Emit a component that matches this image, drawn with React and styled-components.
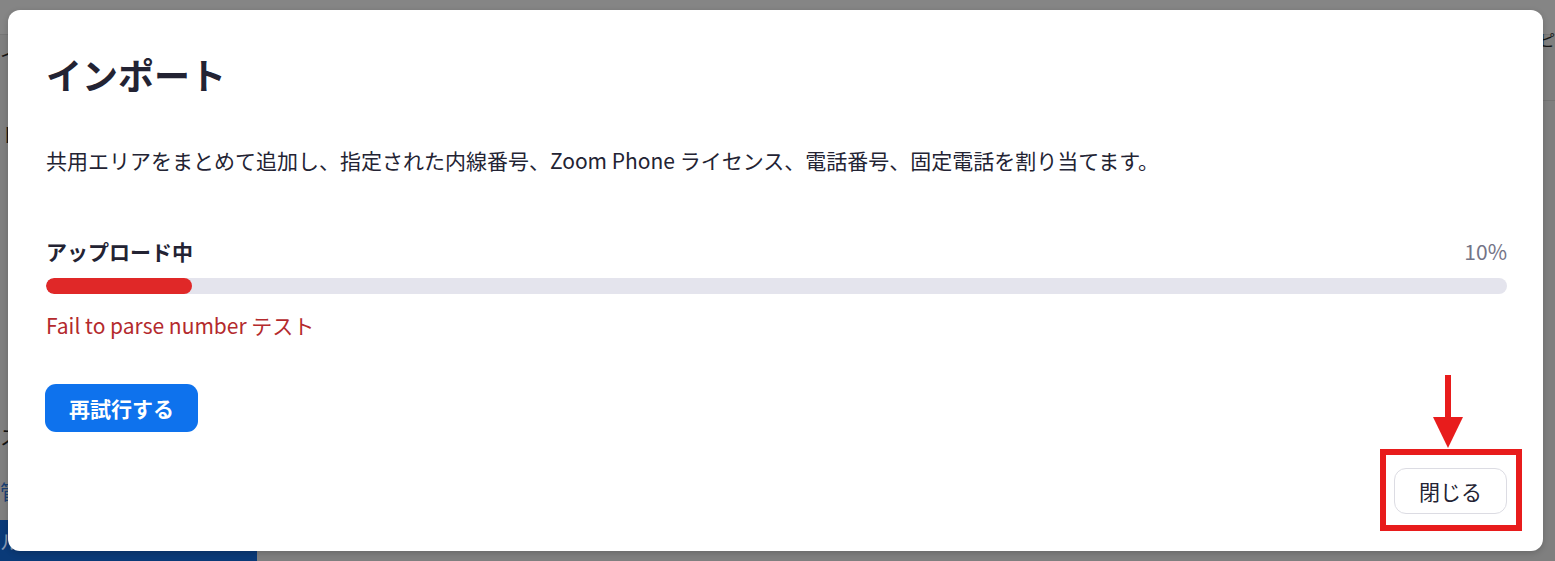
import React from "react";
import styled, { createGlobalStyle } from "styled-components";

const GlobalStyle = createGlobalStyle`
  html, body {
    margin: 0;
    padding: 0;
    width: 100%;
    height: 100%;
    overflow: hidden;
  }
  body {
    font-family: "Noto Sans CJK JP", "Noto Sans", sans-serif;
    background: #7f7f7f;
  }
`;

const Screen = styled.div`
  position: relative;
  width: 1555px;
  height: 561px;
  overflow: hidden;
  background: #7f7f7f;
`;

// faded page that sits behind the dialog
const BehindPage = styled.div`
  display: flex;
  flex-direction: column;
  height: 100%;
`;

const BehindHeader = styled.div`
  height: 34px;
  flex-shrink: 0;
  background: #858585;
  border-bottom: 1px solid #767676;
`;

const BehindBody = styled.div`
  flex: 1;
  display: flex;
`;

const BehindSide = styled.div`
  width: 257px;
  display: flex;
  flex-direction: column;
  font-size: 20px;
`;

const SideItem = styled.div`
  height: 40px;
  line-height: 40px;
  margin-top: ${(p) => p.gap || 0}px;
  color: ${(p) => p.color || "#141414"};
`;

const SideFoot = styled.div`
  margin-top: auto;
  height: 41px;
  background: #0a3a78;
  color: #8a9ab4;
  font-size: 20px;
  line-height: 44px;
  letter-spacing: 22px;
`;

const BehindMain = styled.div`
  flex: 1;
  display: flex;
  flex-direction: column;
`;

const BehindToolbar = styled.div`
  height: 65px;
  border-bottom: 1px solid #747474;
  display: flex;
  justify-content: flex-end;
  font-size: 16px;
  line-height: 8px;
  color: #141414;
`;

const Overlay = styled.div`
  position: absolute;
  inset: 0;
  padding: 10px 12px 10px 8px;
  display: flex;
`;

const Modal = styled.div`
  flex: 1;
  background: #ffffff;
  border-radius: 12px;
  box-shadow: 0 2px 6px rgba(0, 0, 0, 0.18);
  padding: 40px 36px 37px 38px;
  display: flex;
  flex-direction: column;
  color: #232333;
`;

const Title = styled.h1`
  margin: 0;
  font-size: 36px;
  line-height: 48px;
  font-weight: 700;
  color: #232333;
`;

const Description = styled.p`
  margin: 47px 0 0;
  font-size: 21px;
  line-height: 30px;
  color: #232333;
`;

const ProgressHead = styled.div`
  margin-top: 61px;
  display: flex;
  justify-content: space-between;
  align-items: center;
  height: 30px;
  font-size: 21px;
  line-height: 30px;
`;

const ProgressLabel = styled.span`
  font-weight: 700;
  color: #232333;
`;

const Percent = styled.span`
  color: #747487;
`;

const Track = styled.div`
  margin-top: 12px;
  height: 16px;
  border-radius: 8px;
  background: #e4e4ed;
  overflow: hidden;
`;

const Fill = styled.div`
  height: 100%;
  border-radius: 8px;
  background: #e02828;
`;

const ErrorText = styled.div`
  margin-top: 16px;
  font-size: 21px;
  line-height: 30px;
  color: #b42a2d;
`;

const PrimaryButton = styled.button`
  margin-top: 44px;
  margin-left: -1px;
  align-self: flex-start;
  width: 153px;
  height: 48px;
  border: none;
  border-radius: 11px;
  background: #0e72ed;
  color: #ffffff;
  font-family: inherit;
  font-size: 21px;
  font-weight: 700;
  cursor: pointer;
`;

const Footer = styled.div`
  margin-top: 36px;
  display: flex;
  justify-content: flex-end;
`;

const CloseWrap = styled.div`
  position: relative;
`;

const SecondaryButton = styled.button`
  width: 113px;
  height: 46px;
  border: 1px solid #dcdce3;
  border-radius: 12px;
  background: #ffffff;
  color: #232333;
  font-family: inherit;
  font-size: 21px;
  cursor: pointer;
`;

// red annotation drawn on the screenshot
const Highlight = styled.div`
  position: absolute;
  top: -19px;
  left: -14px;
  right: -15px;
  bottom: -17px;
  border: 6px solid #e81c1c;
  pointer-events: none;
`;

const Arrow = styled.svg`
  position: absolute;
  top: -93px;
  left: 38px;
  pointer-events: none;
`;

export default function App() {
  const progress = 10;

  return (
    <>
      <GlobalStyle />
      <Screen>
        <BehindPage>
          <BehindHeader />
          <BehindBody>
            <BehindSide>
              <SideItem>イ</SideItem>
              <SideItem gap={40}>ト</SideItem>
              <SideItem gap={262}>ス</SideItem>
              <SideItem gap={15} color="#1b3f73">管</SideItem>
              <SideFoot>ルム</SideFoot>
            </BehindSide>
            <BehindMain>
              <BehindToolbar>ピ</BehindToolbar>
            </BehindMain>
          </BehindBody>
        </BehindPage>

        <Overlay>
          <Modal>
            <Title>インポート</Title>
            <Description>
              共用エリアをまとめて追加し、指定された内線番号、Zoom Phone ライセンス、電話番号、固定電話を割り当てます。
            </Description>
            <ProgressHead>
              <ProgressLabel>アップロード中</ProgressLabel>
              <Percent>{progress}%</Percent>
            </ProgressHead>
            <Track>
              <Fill style={{ width: `${progress}%` }} />
            </Track>
            <ErrorText>Fail to parse number テスト</ErrorText>
            <PrimaryButton>再試行する</PrimaryButton>
            <Footer>
              <CloseWrap>
                <Arrow width="32" height="74" viewBox="0 0 32 74">
                  <rect x="13" y="0" width="6" height="46" fill="#e81c1c" />
                  <polygon points="1,42 31,42 16,73" fill="#e81c1c" />
                </Arrow>
                <SecondaryButton>閉じる</SecondaryButton>
                <Highlight />
              </CloseWrap>
            </Footer>
          </Modal>
        </Overlay>
      </Screen>
    </>
  );
}
